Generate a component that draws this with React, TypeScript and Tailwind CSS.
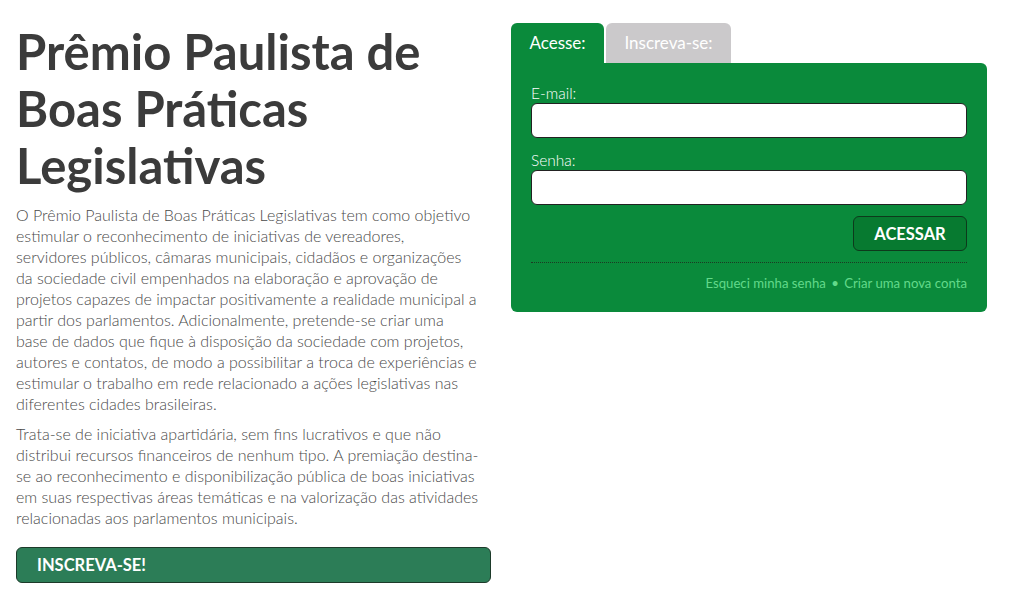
export default function App() {
  return (
    <div className="min-h-screen bg-white font-['Lato',sans-serif]">
      <div className="flex gap-5 pl-4 pr-9 pt-[23px]">
        {/* Left column */}
        <div className="w-[475px] shrink-0">
          <h1 className="text-[49px] leading-[57px] font-bold text-[#3b3b3b]">
            Prêmio Paulista de Boas Práticas Legislativas
          </h1>
          <p className="mt-[10px] whitespace-nowrap text-[16px] leading-[21px] font-light text-[#4a4a4a]">
            O Prêmio Paulista de Boas Práticas Legislativas tem como objetivo
            <br />
            estimular o reconhecimento de iniciativas de vereadores,
            <br />
            servidores públicos, câmaras municipais, cidadãos e organizações
            <br />
            da sociedade civil empenhados na elaboração e aprovação de
            <br />
            projetos capazes de impactar positivamente a realidade municipal a
            <br />
            partir dos parlamentos. Adicionalmente, pretende-se criar uma
            <br />
            base de dados que fique à disposição da sociedade com projetos,
            <br />
            autores e contatos, de modo a possibilitar a troca de experiências e
            <br />
            estimular o trabalho em rede relacionado a ações legislativas nas
            <br />
            diferentes cidades brasileiras.
          </p>
          <p className="mt-[9px] text-[16px] leading-[21px] font-light text-[#4a4a4a]">
            Trata-se de iniciativa apartidária, sem fins lucrativos e que não distribui recursos
            financeiros de nenhum tipo. A premiação destina-se ao reconhecimento e
            disponibilização pública de boas iniciativas em suas respectivas áreas temáticas e na
            valorização das atividades relacionadas aos parlamentos municipais.
          </p>
          <button className="mt-[19px] flex h-9 w-full items-center rounded-md border border-[#1d3a2a] bg-[#2c7d57] px-5 text-left text-[16.5px] font-bold text-white">
            INSCREVA-SE!
          </button>
        </div>

        {/* Right column */}
        <div className="w-[476px] shrink-0">
          <div className="flex gap-[2px]">
            <div className="flex h-10 w-[93px] items-center justify-center rounded-t-md bg-[#0a8a3b] text-[17px] text-white">
              Acesse:
            </div>
            <div className="flex h-10 w-[125px] items-center justify-center rounded-t-md bg-[#cbc9cb] text-[17px] text-white">
              Inscreva-se:
            </div>
          </div>
          <div className="rounded-b-md rounded-tr-md bg-[#0a8a3b] px-5 pb-[18px] pt-[20px]">
            <label className="block text-[15.5px] leading-5 font-light text-white">E-mail:</label>
            <input className="block h-[35px] w-full rounded-md border border-[#222] bg-white" />
            <label className="mt-[12px] block text-[15.5px] leading-5 font-light text-white">Senha:</label>
            <input
              type="password"
              className="block h-[35px] w-full rounded-md border border-[#222] bg-white"
            />
            <div className="mt-[11px] flex justify-end">
              <button className="h-[35px] w-[114px] rounded-md border border-[#0d3a1c] bg-[#077a30] pt-[2px] text-[16.5px] font-bold text-white">
                ACESSAR
              </button>
            </div>
            <div className="mt-[11px] border-t border-dotted border-[#1c3a22]" />
            <div className="mt-[11px] text-right text-[13.2px] text-[#62d98a]">
              Esqueci minha senha <span className="mx-[2px]">•</span> Criar uma nova conta
            </div>
          </div>
        </div>
      </div>
    </div>
  );
}
